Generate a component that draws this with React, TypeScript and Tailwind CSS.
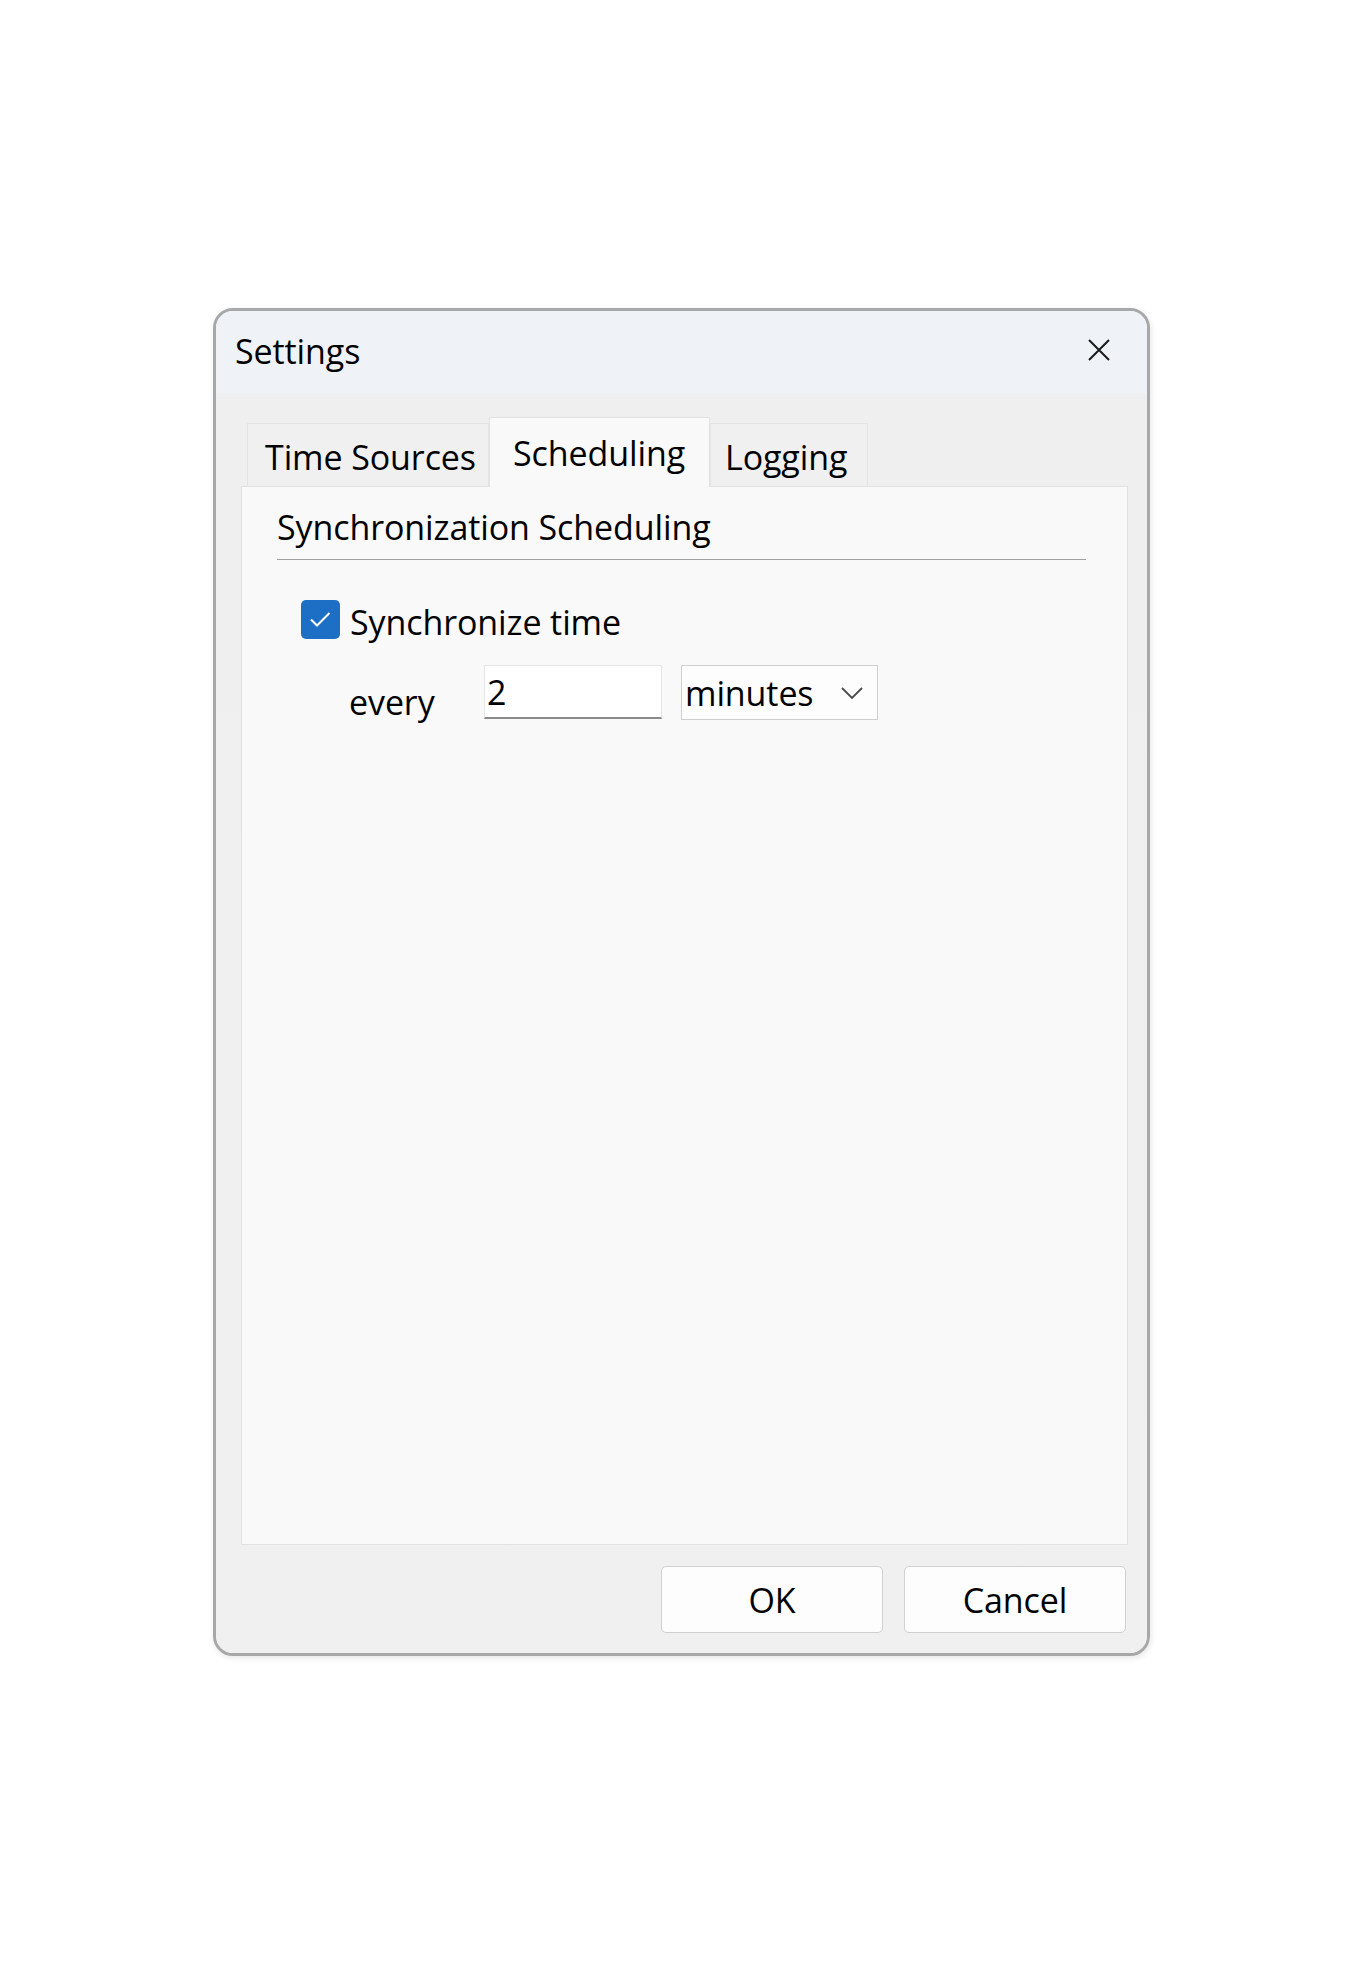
import React from "react";

const FONT = { fontFamily: '"Open Sans", "Noto Sans", sans-serif' };

function CloseIcon() {
  return (
    <svg width="22" height="22" viewBox="0 0 22 22" fill="none" stroke="#1a1a1a" strokeWidth="2">
      <path d="M1 1 L21 21 M21 1 L1 21" />
    </svg>
  );
}

function Chevron() {
  return (
    <svg width="22" height="12" viewBox="0 0 22 12" fill="none" stroke="#4a4a4a" strokeWidth="1.8">
      <polyline points="1,1 11,11 21,1" />
    </svg>
  );
}

function Tab({ label, active, width, pad }: { label: string; active?: boolean; width: string; pad: string }) {
  if (active) {
    return (
      <div
        className={`relative z-10 -mb-px flex h-[70px] items-center border border-b-0 border-[#e2e2e2] bg-[#f9f9f9] ${width} ${pad}`}
      >
        <span className="leading-none">{label}</span>
      </div>
    );
  }
  return (
    <div
      className={`flex h-[63px] items-center border border-b-0 border-[#e4e4e4] bg-[#f0f0f0] pt-[4px] ${width} ${pad}`}
    >
      <span className="leading-none">{label}</span>
    </div>
  );
}

export default function App() {
  return (
    <div className="min-h-[1965px] bg-white pl-[213px] pt-[308px] text-[34px] tracking-[-0.1px] text-black" style={FONT}>
      <div className="w-[937px] overflow-hidden rounded-[20px] border-[3px] border-[#a8a8a8] bg-[#f0f0f0] shadow-[1px_2px_6px_rgba(0,0,0,0.1)]">
        {/* Title bar */}
        <div className="flex h-[82px] items-center justify-between bg-[#eff3f7] pl-[19px] pr-[37px]">
          <span className="-mt-[2px] leading-none">Settings</span>
          <span className="-mt-[4px]">
            <CloseIcon />
          </span>
        </div>

        {/* Body */}
        <div className="bg-gradient-to-b from-[#efefef] to-[#f0f0f0] pl-[25px] pr-[19px] pt-[24px] pb-[20px]">
          <div className="flex items-end pl-[6px]">
            <Tab label="Time Sources" width="w-[242px]" pad="pl-[17px]" />
            <Tab label="Scheduling" active width="w-[221px]" pad="pl-[23px]" />
            <Tab label="Logging" width="w-[158px]" pad="pl-[14px]" />
          </div>

          <div className="h-[1059px] border border-[#e2e2e2] bg-[#f9f9f9]">
            <div className="ml-[35px] mr-[41px] mt-[18px]">
              <div className="h-[44px] leading-[44px]">Synchronization Scheduling</div>
              <div className="mt-[10px] h-px bg-[#a0a0a0]" />
            </div>

            <div className="ml-[59px] mt-[40px] flex items-center">
              <div className="flex h-[39px] w-[39px] items-center justify-center rounded-[5px] bg-[#1d6ec5]">
                <svg width="39" height="39" viewBox="0 0 39 39" fill="none" stroke="#ffffff" strokeWidth="2">
                  <polyline points="10,19.5 16,25.5 28.5,13" />
                </svg>
              </div>
              <span className="ml-[10px] mt-[4px] leading-none">Synchronize time</span>
            </div>

            <div className="ml-[107px] mt-[26px] flex items-start">
              <div className="mt-[10px] h-[54px] w-[135px] leading-[54px]">every</div>
              <div className="flex h-[54px] w-[178px] items-center border border-b-2 border-[#e5e5e5] border-b-[#8a8a8a] bg-white pl-[2px]">
                <span className="leading-none">2</span>
              </div>
              <div className="ml-[19px] flex h-[55px] w-[197px] items-center justify-between border border-[#cfcfcf] bg-[#fdfdfd] pl-[3px] pr-[14px]">
                <span className="leading-none">minutes</span>
                <Chevron />
              </div>
            </div>
          </div>

          <div className="mr-[2px] mt-[21px] flex justify-end gap-[21px]">
            <button className="flex h-[67px] w-[222px] items-center justify-center rounded-[5px] border border-[#d0d0d0] bg-[#fdfdfd] leading-none">
              OK
            </button>
            <button className="flex h-[67px] w-[222px] items-center justify-center rounded-[5px] border border-[#d0d0d0] bg-[#fdfdfd] leading-none">
              Cancel
            </button>
          </div>
        </div>
      </div>
    </div>
  );
}
